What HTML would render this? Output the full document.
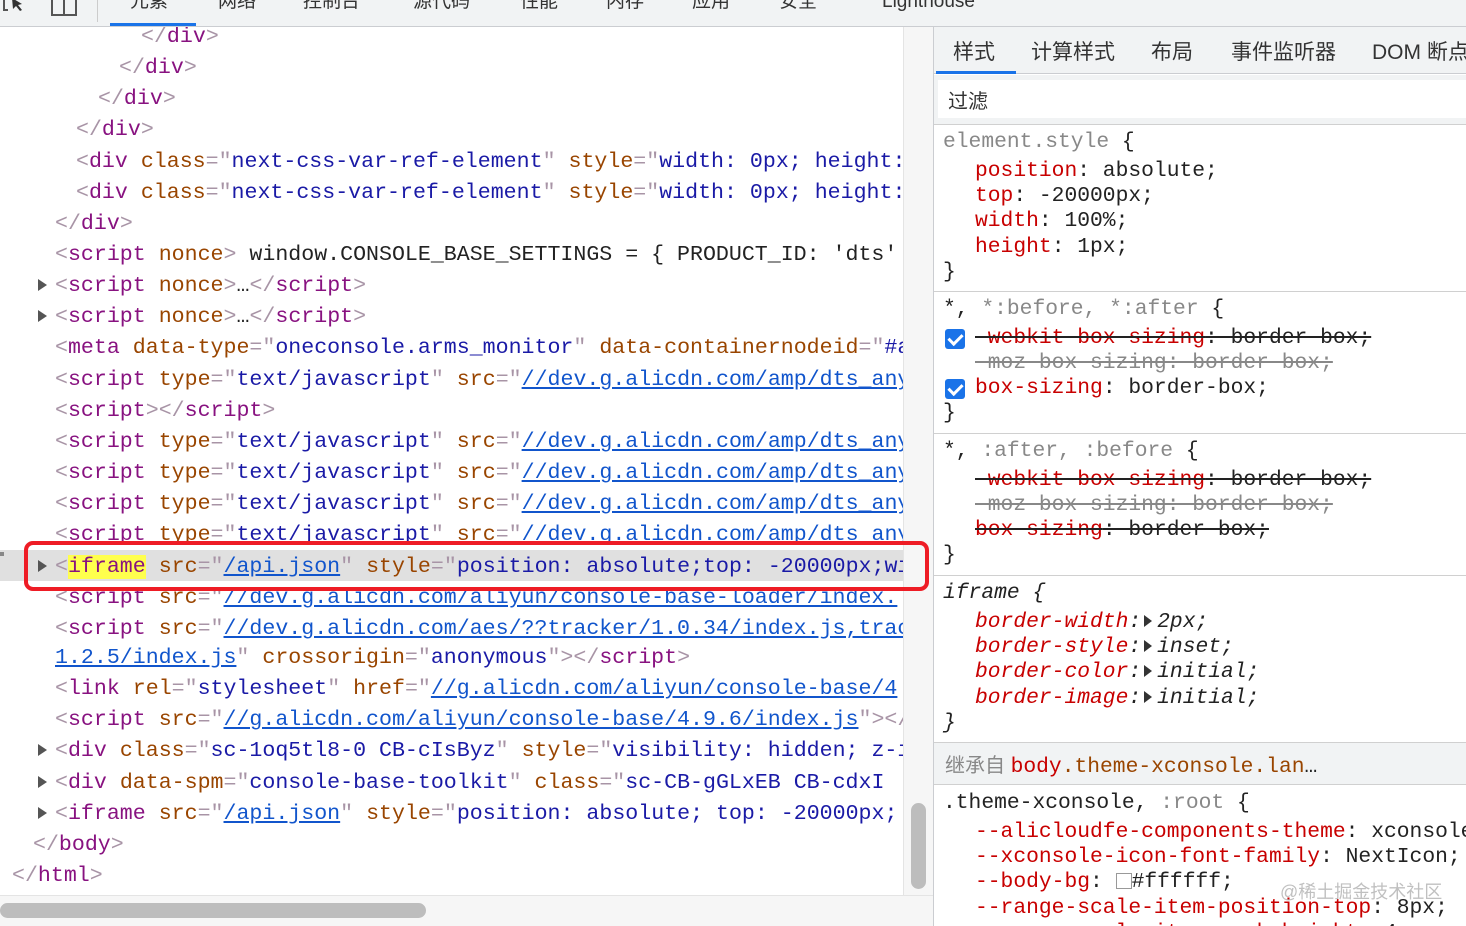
<!DOCTYPE html>
<html><head><meta charset="utf-8"><style>
*{margin:0;padding:0;box-sizing:border-box}
body{width:1466px;height:926px;overflow:hidden;background:#fff;position:relative;font-family:"Liberation Mono","Noto Sans CJK SC",monospace}
.top{position:absolute;left:0;top:0;width:1466px;height:27px;background:#f1f3f4;border-bottom:1px solid #cbcdd1;overflow:hidden}
.top span{position:absolute;top:-11px;font:19px "Liberation Sans","Noto Sans CJK SC",sans-serif;color:#333;line-height:26px}
.left{position:absolute;left:0;top:27px;width:903px;height:868px;overflow:hidden}
.l{position:absolute;height:31px;line-height:31px;font-size:21.6px;white-space:pre;color:#222;margin-top:2px}
.t{color:#881280}.b{color:#a894a6}.a{color:#994500}.v{color:#1a1aa6}.u{color:#1155cc;text-decoration:underline}
.arr{position:absolute;width:0;height:0;border-left:9px solid #555;border-top:6px solid transparent;border-bottom:6px solid transparent;margin-top:2px}
.right{position:absolute;left:933px;top:27px;width:533px;height:899px;overflow:hidden;border-left:1px solid #cbcdd1}
.r{position:absolute;height:25px;line-height:25px;font-size:21.3px;white-space:pre;color:#222;margin-top:3px}
.p{color:#c80000}.g{color:#888}.s{text-decoration:line-through}
.sep{position:absolute;left:0;width:533px;height:1px;background:#d0d0d0}
.cb{position:absolute;width:20px;height:20px;background:#1a73e8;border-radius:3px;margin-top:3px}
.cb:after{content:"";position:absolute;left:6px;top:2px;width:6px;height:11px;border:solid #fff;border-width:0 3px 3px 0;transform:rotate(45deg)}
.tri{display:inline-block;width:0;height:0;border-left:8px solid #333;border-top:6px solid transparent;border-bottom:6px solid transparent;margin:0 5px 0 3px;vertical-align:middle}
</style></head><body>
<div class="top">
<svg style="position:absolute;left:2px;top:-6px" width="30" height="24"><path d="M2 4v12h4" stroke="#555" stroke-width="2" fill="none"/><path d="M10 4l10 6-4 1 4 5-2 1-4-5-3 3z" fill="#333"/></svg>
<div style="position:absolute;left:51px;top:-6px;width:26px;height:22px;border:2px solid #555;border-top:none"></div>
<div style="position:absolute;left:63px;top:-6px;width:2px;height:22px;background:#555"></div>
<div style="position:absolute;left:97px;top:0;width:1px;height:22px;background:#ccc"></div>
<span style="left:130px">元素</span><span style="left:218px">网络</span><span style="left:303px">控制台</span><span style="left:413px">源代码</span><span style="left:520px">性能</span><span style="left:606px">内存</span><span style="left:692px">应用</span><span style="left:779px">安全</span><span style="left:882px">Lighthouse</span>
<div style="position:absolute;left:110px;top:23px;width:86px;height:3px;background:#1a73e8"></div>
</div>

<div class="left">
<div style="position:absolute;left:0;top:523px;width:903px;height:31px;background:#e0e0e0"></div>
<div class="l" style="left:141px;top:-7px"><span class="b">&lt;/</span><span class="t">div</span><span class="b">&gt;</span></div>
<div class="l" style="left:119px;top:24px"><span class="b">&lt;/</span><span class="t">div</span><span class="b">&gt;</span></div>
<div class="l" style="left:98px;top:55px"><span class="b">&lt;/</span><span class="t">div</span><span class="b">&gt;</span></div>
<div class="l" style="left:76px;top:86px"><span class="b">&lt;/</span><span class="t">div</span><span class="b">&gt;</span></div>
<div class="l" style="left:76px;top:118px"><span class="b">&lt;</span><span class="t">div</span> <span class="a">class</span><span class="b">="</span><span class="v">next-css-var-ref-element</span><span class="b">"</span> <span class="a">style</span><span class="b">="</span><span class="v">width: 0px; height: 0px;</span></div>
<div class="l" style="left:76px;top:149px"><span class="b">&lt;</span><span class="t">div</span> <span class="a">class</span><span class="b">="</span><span class="v">next-css-var-ref-element</span><span class="b">"</span> <span class="a">style</span><span class="b">="</span><span class="v">width: 0px; height: 0px;</span></div>
<div class="l" style="left:55px;top:180px"><span class="b">&lt;/</span><span class="t">div</span><span class="b">&gt;</span></div>
<div class="l" style="left:55px;top:211px"><span class="b">&lt;</span><span class="t">script</span> <span class="a">nonce</span><span class="b">&gt;</span> window.CONSOLE_BASE_SETTINGS = { PRODUCT_ID: 'dts'</div>
<div class="arr" style="left:38px;top:250px"></div>
<div class="l" style="left:55px;top:242px"><span class="b">&lt;</span><span class="t">script</span> <span class="a">nonce</span><span class="b">&gt;</span>…<span class="b">&lt;/</span><span class="t">script</span><span class="b">&gt;</span></div>
<div class="arr" style="left:38px;top:281px"></div>
<div class="l" style="left:55px;top:273px"><span class="b">&lt;</span><span class="t">script</span> <span class="a">nonce</span><span class="b">&gt;</span>…<span class="b">&lt;/</span><span class="t">script</span><span class="b">&gt;</span></div>
<div class="l" style="left:55px;top:304px"><span class="b">&lt;</span><span class="t">meta</span> <span class="a">data-type</span><span class="b">="</span><span class="v">oneconsole.arms_monitor</span><span class="b">"</span> <span class="a">data-containernodeid</span><span class="b">="</span><span class="v">#app</span></div>
<div class="l" style="left:55px;top:336px"><span class="b">&lt;</span><span class="t">script</span> <span class="a">type</span><span class="b">="</span><span class="v">text/javascript</span><span class="b">"</span> <span class="a">src</span><span class="b">="</span><span class="u">//dev.g.alicdn.com/amp/dts_any</span></div>
<div class="l" style="left:55px;top:367px"><span class="b">&lt;</span><span class="t">script</span><span class="b">&gt;&lt;/</span><span class="t">script</span><span class="b">&gt;</span></div>
<div class="l" style="left:55px;top:398px"><span class="b">&lt;</span><span class="t">script</span> <span class="a">type</span><span class="b">="</span><span class="v">text/javascript</span><span class="b">"</span> <span class="a">src</span><span class="b">="</span><span class="u">//dev.g.alicdn.com/amp/dts_any</span></div>
<div class="l" style="left:55px;top:429px"><span class="b">&lt;</span><span class="t">script</span> <span class="a">type</span><span class="b">="</span><span class="v">text/javascript</span><span class="b">"</span> <span class="a">src</span><span class="b">="</span><span class="u">//dev.g.alicdn.com/amp/dts_any</span></div>
<div class="l" style="left:55px;top:460px"><span class="b">&lt;</span><span class="t">script</span> <span class="a">type</span><span class="b">="</span><span class="v">text/javascript</span><span class="b">"</span> <span class="a">src</span><span class="b">="</span><span class="u">//dev.g.alicdn.com/amp/dts_any</span></div>
<div class="l" style="left:55px;top:491px"><span class="b">&lt;</span><span class="t">script</span> <span class="a">type</span><span class="b">="</span><span class="v">text/javascript</span><span class="b">"</span> <span class="a">src</span><span class="b">="</span><span class="u">//dev.g.alicdn.com/amp/dts_any</span></div>
<div class="arr" style="left:38px;top:531px"></div>
<div class="l" style="left:55px;top:523px"><span class="b">&lt;</span><span class="t" style="background:#ffff4d">iframe</span> <span class="a">src</span><span class="b">="</span><span class="u">/api.json</span><span class="b">"</span> <span class="a">style</span><span class="b">="</span><span class="v">position: absolute;top: -20000px;width</span></div>
<div class="l" style="left:55px;top:554px"><span class="b">&lt;</span><span class="t">script</span> <span class="a">src</span><span class="b">="</span><span class="u">//dev.g.alicdn.com/aliyun/console-base-loader/index.</span></div>
<div class="l" style="left:55px;top:585px"><span class="b">&lt;</span><span class="t">script</span> <span class="a">src</span><span class="b">="</span><span class="u">//dev.g.alicdn.com/aes/??tracker/1.0.34/index.js,trac</span></div>
<div class="l" style="left:55px;top:614px"><span class="u">1.2.5/index.js</span><span class="b">"</span> <span class="a">crossorigin</span><span class="b">="</span><span class="v">anonymous</span><span class="b">"&gt;&lt;/</span><span class="t">script</span><span class="b">&gt;</span></div>
<div class="l" style="left:55px;top:645px"><span class="b">&lt;</span><span class="t">link</span> <span class="a">rel</span><span class="b">="</span><span class="v">stylesheet</span><span class="b">"</span> <span class="a">href</span><span class="b">="</span><span class="u">//g.alicdn.com/aliyun/console-base/4</span></div>
<div class="l" style="left:55px;top:676px"><span class="b">&lt;</span><span class="t">script</span> <span class="a">src</span><span class="b">="</span><span class="u">//g.alicdn.com/aliyun/console-base/4.9.6/index.js</span><span class="b">"&gt;&lt;/</span></div>
<div class="arr" style="left:38px;top:715px"></div>
<div class="l" style="left:55px;top:707px"><span class="b">&lt;</span><span class="t">div</span> <span class="a">class</span><span class="b">="</span><span class="v">sc-1oq5tl8-0 CB-cIsByz</span><span class="b">"</span> <span class="a">style</span><span class="b">="</span><span class="v">visibility: hidden; z-i</span></div>
<div class="arr" style="left:38px;top:747px"></div>
<div class="l" style="left:55px;top:739px"><span class="b">&lt;</span><span class="t">div</span> <span class="a">data-spm</span><span class="b">="</span><span class="v">console-base-toolkit</span><span class="b">"</span> <span class="a">class</span><span class="b">="</span><span class="v">sc-CB-gGLxEB CB-cdxI</span></div>
<div class="arr" style="left:38px;top:778px"></div>
<div class="l" style="left:55px;top:770px"><span class="b">&lt;</span><span class="t">iframe</span> <span class="a">src</span><span class="b">="</span><span class="u">/api.json</span><span class="b">"</span> <span class="a">style</span><span class="b">="</span><span class="v">position: absolute; top: -20000px; </span></div>
<div class="l" style="left:33px;top:801px"><span class="b">&lt;/</span><span class="t">body</span><span class="b">&gt;</span></div>
<div class="l" style="left:12px;top:832px"><span class="b">&lt;/</span><span class="t">html</span><span class="b">&gt;</span></div>
</div>
<div style="position:absolute;left:0;top:552px;width:4px;height:4px;background:#888"></div>
<div style="position:absolute;left:903px;top:27px;width:30px;height:872px;background:#f6f6f6;border-left:1px solid #e4e4e4"></div>
<div style="position:absolute;left:911px;top:803px;width:15px;height:86px;background:#bdbdbd;border-radius:8px"></div>
<div style="position:absolute;left:0;top:895px;width:933px;height:31px;background:#f6f6f6;border-top:1px solid #e4e4e4"></div>
<div style="position:absolute;left:0;top:903px;width:426px;height:15px;background:#bdbdbd;border-radius:8px"></div>
<div style="position:absolute;left:24px;top:541px;width:905px;height:50px;border:4px solid #ee1c25;border-radius:9px"></div>

<div class="right">
<div style="position:absolute;left:0;top:0;width:533px;height:47px;background:#f1f3f4;border-bottom:1px solid #cbcdd1"></div>
<div style="position:absolute;left:2px;top:44px;width:80px;height:3px;background:#1a73e8"></div>
<div style="position:absolute;top:9px;left:19px;font:21px 'Liberation Sans','Noto Sans CJK SC',sans-serif;color:#333;white-space:pre">样式<span style="margin-left:36px">计算样式</span><span style="margin-left:36px">布局</span><span style="margin-left:38px">事件监听器</span><span style="margin-left:36px">DOM 断点</span></div>
<div style="position:absolute;left:0;top:48px;width:533px;height:49px;background:#f1f3f4"></div>
<div style="position:absolute;left:4px;top:53px;width:529px;height:38px;background:#fff"></div>
<div style="position:absolute;left:14px;top:58px;font:20px 'Liberation Sans','Noto Sans CJK SC',sans-serif;color:#333">过滤</div>
<div class="sep" style="top:97px"></div>
<div class="r" style="left:9px;top:100px"><span class="g">element.style</span> {</div>
<div class="r" style="left:41px;top:129px"><span class="p">position</span>: absolute;</div>
<div class="r" style="left:41px;top:154px"><span class="p">top</span>: -20000px;</div>
<div class="r" style="left:41px;top:179px"><span class="p">width</span>: 100%;</div>
<div class="r" style="left:41px;top:205px"><span class="p">height</span>: 1px;</div>
<div class="r" style="left:9px;top:230px">}</div>
<div class="sep" style="top:264px"></div>
<div class="r" style="left:9px;top:267px">*, <span class="g">*:before, *:after</span> {</div>
<div class="cb" style="left:11px;top:299px"></div>
<div class="r s" style="left:41px;top:296px"><span class="p">-webkit-box-sizing</span>: border-box;</div>
<div class="r s g" style="left:41px;top:321px">-moz-box-sizing: border-box;</div>
<div class="cb" style="left:11px;top:349px"></div>
<div class="r" style="left:41px;top:346px"><span class="p">box-sizing</span>: border-box;</div>
<div class="r" style="left:9px;top:371px">}</div>
<div class="sep" style="top:406px"></div>
<div class="r" style="left:9px;top:409px">*, <span class="g">:after, :before</span> {</div>
<div class="r s" style="left:41px;top:438px"><span class="p">-webkit-box-sizing</span>: border-box;</div>
<div class="r s g" style="left:41px;top:463px">-moz-box-sizing: border-box;</div>
<div class="r s" style="left:41px;top:488px"><span class="p">box-sizing</span>: border-box;</div>
<div class="r" style="left:9px;top:513px">}</div>
<div class="sep" style="top:548px"></div>
<div class="r" style="left:9px;top:551px;font-style:italic">iframe {</div>
<div class="r" style="left:41px;top:580px;font-style:italic"><span class="p">border-width</span>:<span class="tri"></span>2px;</div>
<div class="r" style="left:41px;top:605px;font-style:italic"><span class="p">border-style</span>:<span class="tri"></span>inset;</div>
<div class="r" style="left:41px;top:630px;font-style:italic"><span class="p">border-color</span>:<span class="tri"></span>initial;</div>
<div class="r" style="left:41px;top:656px;font-style:italic"><span class="p">border-image</span>:<span class="tri"></span>initial;</div>
<div class="r" style="left:9px;top:681px;font-style:italic">}</div>
<div style="position:absolute;left:0;top:715px;width:533px;height:43px;background:#f1f3f4;border-top:1px solid #d0d0d0;border-bottom:1px solid #d0d0d0"></div>
<div class="r" style="left:11px;top:724px"><span class="g" style="font-family:'Liberation Sans','Noto Sans CJK SC',sans-serif;font-size:20px">继承自 </span><span class="p">body</span><span style="color:#994500">.theme-xconsole.lan</span>…</div>
<div class="r" style="left:9px;top:761px">.theme-xconsole, <span class="g">:root</span> {</div>
<div class="r" style="left:41px;top:790px"><span class="p">--alicloudfe-components-theme</span>: xconsole;</div>
<div class="r" style="left:41px;top:815px"><span class="p">--xconsole-icon-font-family</span>: NextIcon;</div>
<div class="r" style="left:41px;top:840px"><span class="p">--body-bg</span>: <span style="display:inline-block;width:16px;height:16px;border:1px solid #999;vertical-align:-2px"></span>#ffffff;</div>
<div class="r" style="left:41px;top:866px"><span class="p">--range-scale-item-position-top</span>: 8px;</div>
<div class="r" style="left:41px;top:891px"><span class="p">--range-scale-item-mark-height</span>: 4px;</div>
<div style="position:absolute;left:346px;top:851px;font:18px 'Liberation Sans','Noto Sans CJK SC',sans-serif;color:rgba(150,150,150,.6)">@稀土掘金技术社区</div>
</div>
</body></html>
